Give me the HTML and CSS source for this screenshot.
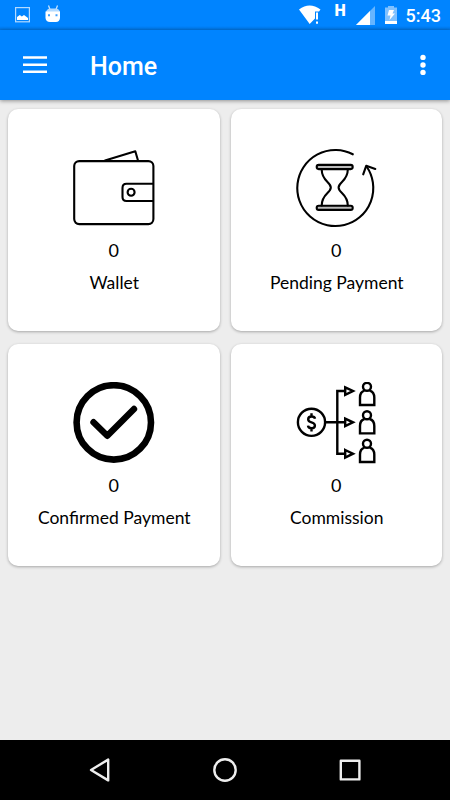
FILE: index.html
```html
<!DOCTYPE html>
<html lang="en">
<head>
  <meta charset="UTF-8">
  <title>Home</title>
  <link rel="stylesheet" href="styles.css">
</head>
<body>

  <div class="status-bar">
    <div class="status-left">
      <svg class="icon-image" width="16" height="16" viewBox="0 0 16 16">
        <rect x="0.6" y="0.6" width="13.8" height="14.2" fill="none" stroke="#b3daff" stroke-width="1.2"/>
        <path d="M2 13V10L4.8 8L6.8 9.5L9 8L13 11V13Z" fill="#fff"/>
      </svg>
      <svg class="icon-debug" width="16" height="18" viewBox="0 0 16 18">
        <path d="M3.5 0.5L5 4.5M12.5 0.5L11 4.5" stroke="#cfe8ff" stroke-width="1.2"/>
        <path d="M1 7Q2 3.5 5 3.5H11Q14 3.5 15 7Z" fill="#b3daff"/>
        <path d="M0.5 6.5H15V13Q14.5 17 11 17H5Q1 17 0.5 13Z" fill="#fff"/>
        <path d="M3 9.2H5V11.2H3ZM10.5 9.2H12.5V11.2H10.5Z" fill="#3d9fff"/>
      </svg>
    </div>
    <div class="status-right">
      <svg class="icon-wifi" width="24" height="20" viewBox="0 0 24 20">
        <path d="M0 4.5Q10.5 -3.5 21.5 4.5L20 6.5H16V13.5L10.7 19Z" fill="#fff"/>
        <path d="M17 7.5H19V14.5H17ZM17 16.5H19V18.7H17Z" fill="#fff"/>
      </svg>
      <span class="network">H</span>
      <svg class="icon-signal" width="19" height="19" viewBox="0 0 19 19">
        <path d="M0 19L19 0V19Z" fill="#66b5ff"/>
        <path d="M0 19L14 5V19Z" fill="#fff"/>
      </svg>
      <svg class="icon-battery" width="12" height="18" viewBox="0 0 12 18">
        <path d="M0 1.5H3V0H9V1.5H12V15H0Z" fill="#80c1ff"/>
        <path d="M0 15H12V18H0Z" fill="#fff"/>
        <path d="M4 4H9L7.5 7.5H10L4.5 14L5.5 9.5H2.5Z" fill="#fff"/>
      </svg>
      <span class="clock">5:43</span>
    </div>
  </div>

  <div class="navbar">
    <svg class="menu" width="24" height="18" viewBox="0 0 24 18">
      <path d="M0 1.5H24M0 8.7H24M0 15.7H24" stroke="#fff" stroke-width="2.6"/>
    </svg>
    <h1>Home</h1>
    <svg class="more" width="6" height="22" viewBox="0 0 6 22">
      <circle cx="3" cy="3.4" r="2.7" fill="#fff"/>
      <circle cx="3" cy="11" r="2.7" fill="#fff"/>
      <circle cx="3" cy="18.4" r="2.7" fill="#fff"/>
    </svg>
  </div>

  <div class="cards">
    <div class="card">
      <svg class="card-icon" viewBox="0 0 82 82">
        <rect x="1.2" y="14.1" width="79.2" height="63" rx="5"/>
        <path d="M32 13.5L62.3 4.3L65 13.5M80 36.8H53.5Q49.5 36.8 49.5 41V50Q49.5 54 53.5 54H80"/>
        <circle cx="58.1" cy="45.3" r="3.5"/>
      </svg>
      <p class="count">0</p>
      <p class="label">Wallet</p>
    </div>

    <div class="card">
      <svg class="card-icon" viewBox="0 0 82 82">
        <path d="M57.8 7.3A38 38 0 1 0 71.6 19.5"/>
        <path d="M68.2 27.3L71.2 18.8L80.3 21.9"/>
        <rect x="21.7" y="17.9" width="36" height="4.2" rx="2" fill="#bbb"/>
        <rect x="21.7" y="58.7" width="36" height="4.2" rx="2" fill="#bbb"/>
        <path d="M26.7 22.5C26.7 34 35.8 35 35.8 40.5C35.8 46 26.7 47 26.7 58.5"/>
        <path d="M52.8 22.5C52.8 34 43.6 35 43.6 40.5C43.6 46 52.8 47 52.8 58.5"/>
      </svg>
      <p class="count">0</p>
      <p class="label">Pending Payment</p>
    </div>

    <div class="card">
      <svg class="card-icon" viewBox="0 0 82 82">
        <circle cx="40.8" cy="40.4" r="37.2" stroke-width="6.6"/>
        <path d="M20.5 40.2L34.3 53.8L61 27" stroke-width="6.4"/>
      </svg>
      <p class="count">0</p>
      <p class="label">Confirmed Payment</p>
    </div>

    <div class="card">
      <svg class="card-icon sharp" viewBox="0 0 82 82">
        <circle cx="16.5" cy="40.3" r="13.6"/>
        <path d="M20 36.8Q19.6 34.5 16.5 34.5Q13.2 34.5 13.2 37.2Q13.2 39.5 16.5 40.3Q19.9 41.2 19.9 43.5Q19.9 46.2 16.5 46.2Q13.2 46.2 13 43.7M16.5 31.2V34.5M16.5 46V49.6"/>
        <path d="M30 40.3H50M50 9H42.3V71.7H50"/>
        <path d="M50.2 5.4L58 9L50.2 12.8ZM50.2 36.6L58 40.3L50.2 44.1ZM50.2 68L58 71.7L50.2 75.5Z"/>
        <g id="person">
          <circle cx="72" cy="4.8" r="4"/>
          <path d="M69.4 8.6Q65 10 65 15.5V23H79.3V15.5Q79.3 10 74.6 8.6"/>
        </g>
        <use href="#person" y="28.4"/>
        <use href="#person" y="57"/>
      </svg>
      <p class="count">0</p>
      <p class="label">Commission</p>
    </div>
  </div>

  <div class="bottom-nav">
    <svg width="26" height="26" viewBox="0 0 26 26">
      <path d="M4 13L21.2 2.6V23.4Z"/>
    </svg>
    <svg width="26" height="26" viewBox="0 0 26 26">
      <circle cx="13" cy="13" r="10.7"/>
    </svg>
    <svg width="26" height="26" viewBox="0 0 26 26">
      <rect x="3.8" y="3.8" width="18.6" height="18.6"/>
    </svg>
  </div>

</body>
</html>
```

FILE: styles.css
```css
* {
  margin: 0;
  padding: 0;
  box-sizing: border-box;
}

body {
  font-family: Lato, sans-serif;
  background: #ededed;
  height: 100vh;
  overflow: hidden;
  display: flex;
  flex-direction: column;
  color: #000;
}

svg {
  display: block;
  flex-shrink: 0;
}

.status-bar {
  display: flex;
  justify-content: space-between;
  height: 30px;
  padding: 0 9px 0 15px;
  background: linear-gradient(#0084ff 26px, #0073df);
  color: white;
  font-family: Roboto, sans-serif;
}

.status-left,
.status-right {
  display: flex;
  align-items: flex-start;
}

.icon-image {
  margin-top: 7px;
}

.icon-debug {
  margin: 5px 0 0 14px;
}

.icon-wifi {
  margin-top: 5px;
}

.network {
  width: 12px;
  margin: 2px 9px 0 12px;
  font-size: 16px;
  font-weight: 900;
  line-height: 18px;
}

.icon-signal {
  margin-top: 6px;
}

.icon-battery {
  margin: 6px 9px 0 10px;
}

.clock {
  font-size: 18px;
  font-weight: 500;
  line-height: 32px;
}

.navbar {
  display: flex;
  align-items: center;
  height: 70px;
  padding: 0 24.5px 0 23px;
  background: #0084ff;
  color: white;
  box-shadow: 0 1px 4px rgba(0, 0, 0, 0.4);
}

.navbar h1 {
  flex: 1;
  margin: 3px 0 0 43px;
  font-family: Roboto, sans-serif;
  font-size: 25px;
  font-weight: 500;
}

.cards {
  flex: 1;
  display: grid;
  grid-template-columns: 1fr 1fr;
  grid-auto-rows: 221.4px;
  gap: 13.6px 11px;
  padding: 9.4px 8px;
}

.card {
  display: flex;
  flex-direction: column;
  align-items: center;
  padding-top: 38px;
  background: white;
  border-radius: 10px;
  box-shadow: 0 1px 3px rgba(0, 0, 0, 0.3);
}

.card-icon {
  width: 82px;
  height: 82px;
  fill: none;
  stroke: #000;
  stroke-width: 2.1;
  stroke-linecap: round;
  stroke-linejoin: round;
}

.sharp {
  stroke-width: 2.4;
  stroke-linecap: butt;
  stroke-linejoin: miter;
}

.count {
  margin-top: 10px;
  font-size: 18px;
  line-height: 22px;
}

.label {
  margin-top: 11px;
  padding-left: 1px;
  font-size: 17.5px;
  line-height: 22px;
}

.bottom-nav {
  display: flex;
  justify-content: space-between;
  align-items: center;
  height: 60px;
  padding: 0 87px;
  background: #000;
}

.bottom-nav svg {
  fill: none;
  stroke: #eee;
  stroke-width: 2.4;
  stroke-linejoin: round;
}
```
